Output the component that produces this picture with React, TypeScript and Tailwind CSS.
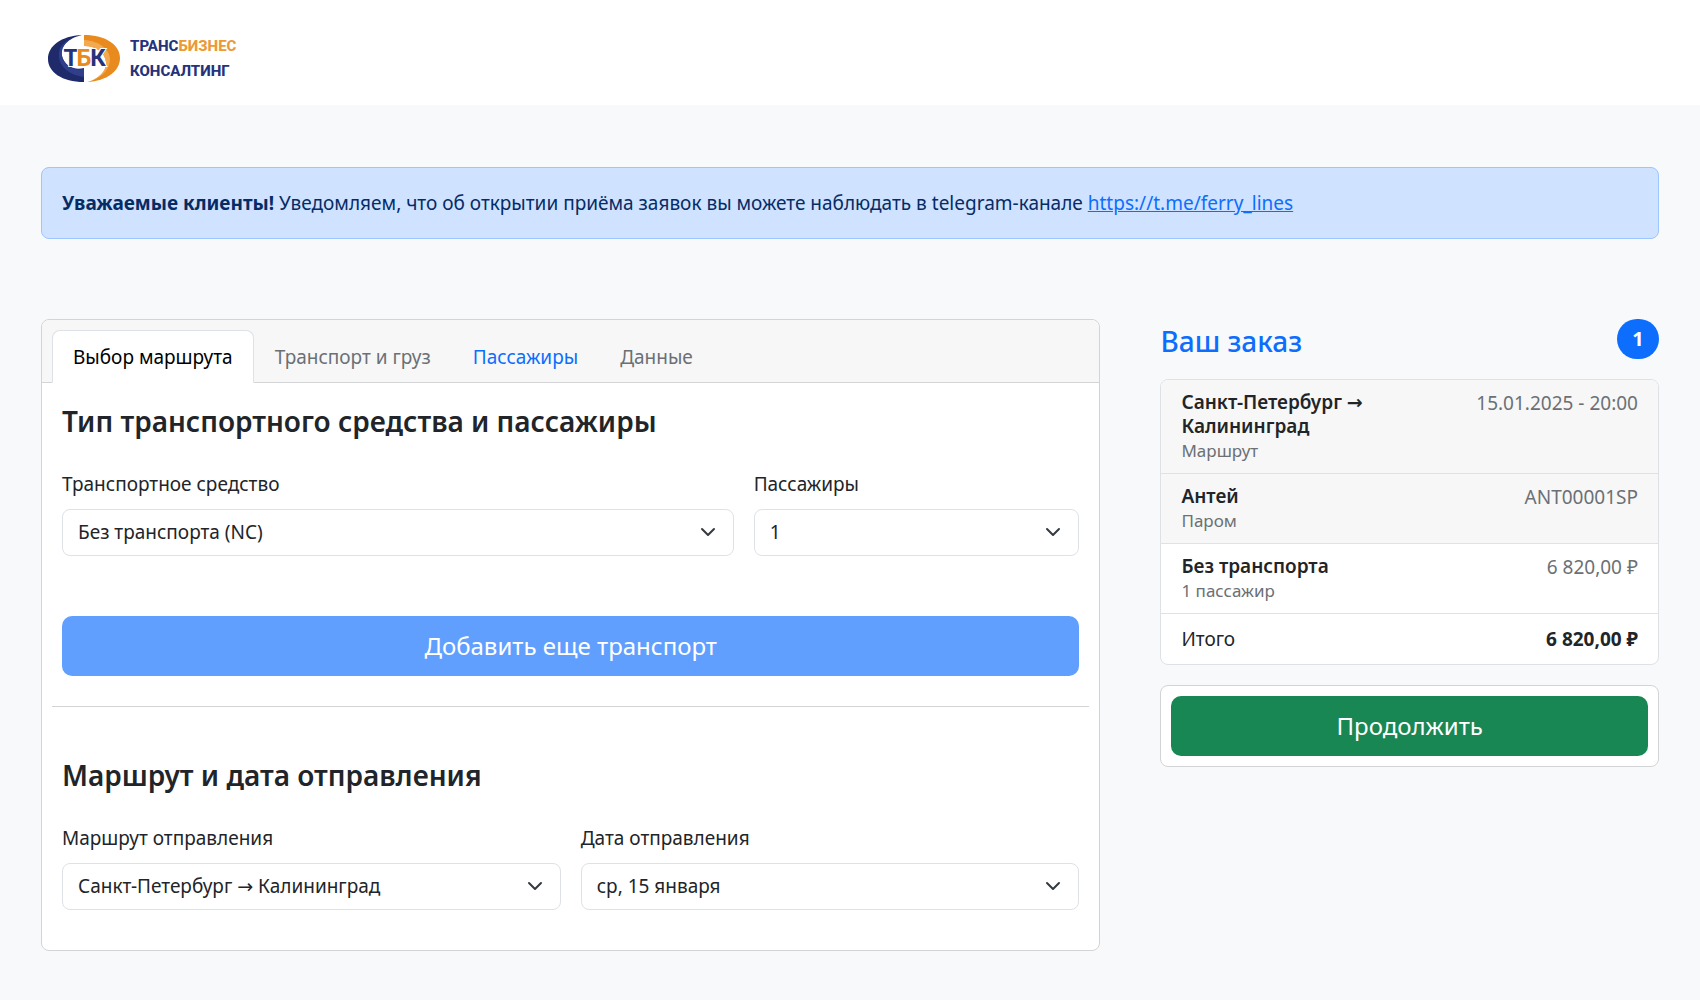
import { useState } from "react"
import clsx from "clsx"

interface SelectFieldProps {
  id: string
  label: string
  options: string[]
  className?: string
}

const tabs = [
  { id: "route", label: "Выбор маршрута", disabled: false },
  { id: "cargo", label: "Транспорт и груз", disabled: true },
  { id: "passengers", label: "Пассажиры", disabled: false },
  { id: "data", label: "Данные", disabled: true },
]

const orderItems = [
  { title: "Санкт-Петербург → Калининград", note: "Маршрут", value: "15.01.2025 - 20:00", muted: true },
  { title: "Антей", note: "Паром", value: "ANT00001SP", muted: true },
  { title: "Без транспорта", note: "1 пассажир", value: "6 820,00 ₽", muted: false },
]

function Logo() {
  return (
    <a href="#" className="flex items-center gap-[10px]" aria-label="ТрансБизнесКонсалтинг">
      <svg width="72" height="48" viewBox="0 0 72 48" aria-hidden="true">
        <path d="M34 0C13 1 0 11 0 24s14 23 36 23V33C26 36 16 30 14 21 12 12 20 3 34 0Z" fill="#1f2a6b" />
        <path d="M24 3C15 7 10 13 11 22c1 10 10 18 25 20v-8C25 36 16 30 14 21 13 13 17 7 24 3Z" fill="#2f3f8c" />
        <path d="M36 0c22 0 36 10 36 23S59 46 39 47c12-3 20-11 19-20-1-9-9-16-22-16Z" fill="#e88a1e" />
        <path d="M36 5c16 1 26 10 26 19 0 10-8 18-17 21 8-4 14-11 13-18-1-9-9-16-22-16Z" fill="#f2a950" />
        <g
          fontFamily="Roboto, sans-serif"
          fontWeight="700"
          fontSize="24"
          stroke="#fff"
          strokeWidth="2"
          paintOrder="stroke"
          textAnchor="middle"
        >
          <text x="23" y="31" fill="#26337a">Т</text>
          <text x="36" y="31" fill="#e88a1e">Б</text>
          <text x="50" y="31" fill="#26337a">К</text>
        </g>
      </svg>
      <span className="flex flex-col font-[Roboto,sans-serif] text-[15px] leading-[25px] font-extrabold text-[#26337a]">
        <span>
          ТРАНС<span className="text-[#eb9a35]">БИЗНЕС</span>
        </span>
        <span>КОНСАЛТИНГ</span>
      </span>
    </a>
  )
}

function SelectField({ id, label, options, className }: SelectFieldProps) {
  return (
    <div className={className}>
      <label htmlFor={id} className="mb-[10px] block leading-[30px]">
        {label}
      </label>
      <div className="relative">
        <select
          id={id}
          className="block h-[47px] w-full appearance-none rounded-lg border border-[#dee2e6] bg-white pr-12 pl-[15px]"
        >
          {options.map((option) => (
            <option key={option}>{option}</option>
          ))}
        </select>
        <svg
          className="pointer-events-none absolute top-[15px] right-[18px]"
          width="16"
          height="16"
          viewBox="0 0 16 16"
          fill="none"
          stroke="#343a40"
          strokeWidth="2"
          strokeLinecap="round"
          strokeLinejoin="round"
          aria-hidden="true"
        >
          <path d="m2 5 6 6 6-6" />
        </svg>
      </div>
    </div>
  )
}

function OrderSummary() {
  return (
    <aside>
      <div className="mb-5 flex h-10 items-end justify-between">
        <h4 className="text-[28px] leading-[36px] font-medium text-[#0d6efd]">Ваш заказ</h4>
        <span className="flex h-10 w-[42px] items-center justify-center rounded-full bg-[#0d6efd] text-xl font-bold text-white">
          1
        </span>
      </div>

      <ul className="divide-y divide-[#dee2e6] overflow-hidden rounded-lg border border-[#dee2e6] bg-white">
        {orderItems.map((item) => (
          <li
            key={item.title}
            className={clsx("flex justify-between gap-5 px-5 py-[10px]", item.muted && "bg-[#f7f7f7]")}
          >
            <div>
              <h6 className="leading-6 font-semibold">{item.title}</h6>
              <small className="block text-[17px] leading-[25px] text-[#6b7075]">{item.note}</small>
            </div>
            <span className="shrink-0 leading-[26px] text-[#6b7075]">{item.value}</span>
          </li>
        ))}
        <li className="flex justify-between px-5 py-[10px] leading-[30px]">
          <span>Итого</span>
          <strong>6 820,00 ₽</strong>
        </li>
      </ul>

      <div className="mt-5 rounded-lg border border-[#d3d4d5] bg-white p-[10px]">
        <button type="button" className="h-[60px] w-full rounded-[10px] bg-[#198754] text-2xl text-white">
          Продолжить
        </button>
      </div>
    </aside>
  )
}

export default function App() {
  const [activeTab, setActiveTab] = useState("route")

  return (
    <div className="min-h-screen bg-[#f8f9fa] font-['Noto_Sans','DejaVu_Sans',sans-serif] text-[19px] text-[#212529]">
      <header className="flex bg-white px-12 pt-[34px] pb-[21px]">
        <Logo />
      </header>

      <main className="px-[41px] pt-[62px] pb-[49px]">
        <div className="rounded-lg border border-[#9ec5fe] bg-[#cfe2ff] p-5 leading-[30px] text-[#052c65]" role="alert">
          <strong>Уважаемые клиенты!</strong> Уведомляем, что об открытии приёма заявок вы можете наблюдать в
          telegram-канале{" "}
          <a href="https://t.me/ferry_lines" className="text-[#0d6efd] underline">
            https://t.me/ferry_lines
          </a>
        </div>

        <div className="mt-20 grid items-start gap-[60px] lg:grid-cols-[17fr_8fr]">
          <section className="rounded-lg border border-[#d3d4d5] bg-white">
            <div className="rounded-t-lg border-b border-[#d3d4d5] bg-[#f7f7f7] px-[10px] pt-[10px]">
              <div className="-mb-px flex flex-wrap" role="tablist">
                {tabs.map((tab) => (
                  <button
                    key={tab.id}
                    type="button"
                    role="tab"
                    aria-selected={activeTab === tab.id}
                    disabled={tab.disabled}
                    onClick={() => setActiveTab(tab.id)}
                    className={clsx(
                      "rounded-t-lg border px-5 pt-[11px] pb-[10px] leading-[30px]",
                      activeTab === tab.id
                        ? "border-[#dee2e6] border-b-white bg-white text-black"
                        : "border-transparent",
                      activeTab !== tab.id && (tab.disabled ? "text-[#6b7075]" : "text-[#0d6efd]")
                    )}
                  >
                    {tab.label}
                  </button>
                ))}
              </div>
            </div>

            <form className="px-5 pt-5 pb-10">
              <h3 className="text-[28px] leading-[36px] font-semibold">Тип транспортного средства и пассажиры</h3>
              <div className="mt-[30px] grid gap-5 md:grid-cols-12">
                <SelectField
                  id="vehicle"
                  label="Транспортное средство"
                  options={["Без транспорта (NC)"]}
                  className="md:col-span-8"
                />
                <SelectField id="count" label="Пассажиры" options={["1", "2", "3", "4"]} className="md:col-span-4" />
              </div>
              <button type="button" className="mt-[60px] h-[60px] w-full rounded-[10px] bg-[#619fff] text-2xl text-white">
                Добавить еще транспорт
              </button>

              <hr className="-mx-[10px] mt-[30px] border-[#d3d4d5]" />

              <h3 className="mt-[50px] text-[28px] leading-[36px] font-semibold">Маршрут и дата отправления</h3>
              <div className="mt-[30px] grid gap-5 md:grid-cols-2">
                <SelectField
                  id="route"
                  label="Маршрут отправления"
                  options={["Санкт-Петербург → Калининград"]}
                />
                <SelectField id="date" label="Дата отправления" options={["ср, 15 января"]} />
              </div>
            </form>
          </section>

          <OrderSummary />
        </div>
      </main>
    </div>
  )
}
